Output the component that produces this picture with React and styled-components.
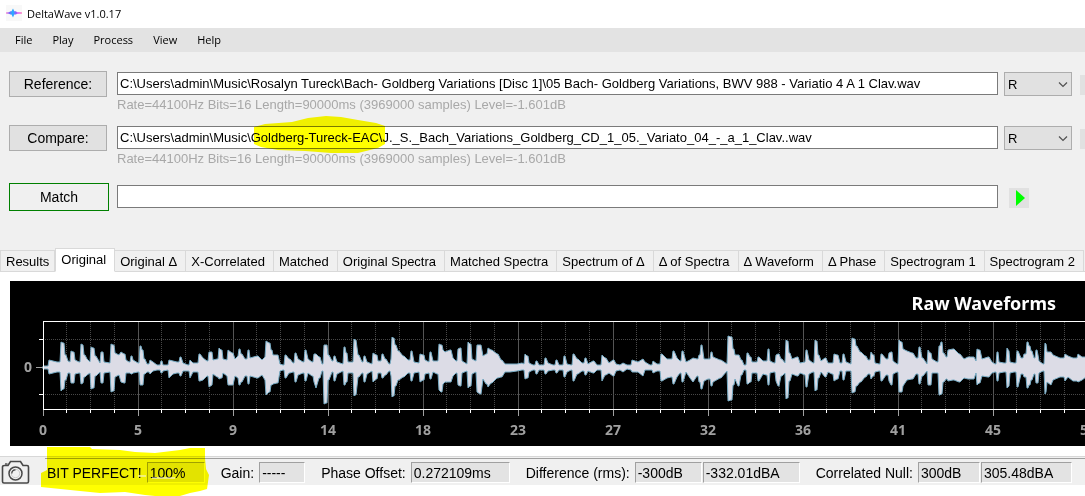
import { useState } from "react";
import styled, { createGlobalStyle } from "styled-components";

const colors = {
  face: "#f0f0f0",
  menu: "#e3e3e3",
  button: "#e1e1e1",
  edge: "#adadad",
  field: "#7a7a7a",
  note: "#a8a8a8",
  tabEdge: "#d9d9d9",
  marker: "#ffff00",
};

const GlobalStyle = createGlobalStyle`
  * {
    box-sizing: border-box;
  }
  body {
    margin: 0;
    background: white;
    color: black;
    font-family: "Liberation Sans", Arial, sans-serif;
    font-size: 13px;
    overflow-x: hidden;
  }
  button, input, select {
    font: inherit;
    color: inherit;
    border-radius: 0;
    padding: 0;
    margin: 0;
  }
`;

const Window = styled.div`
  display: flex;
  flex-direction: column;
  min-height: 100vh;
  overflow: hidden;
`;

const TitleBar = styled.header`
  display: flex;
  align-items: center;
  gap: 5px;
  height: 28px;
  padding: 0 6px 2px;
  font-family: "Open Sans", sans-serif;
`;

const AppName = styled.h1`
  margin: 0;
  font-size: 11px;
  font-weight: 400;
`;

const MenuBar = styled.nav`
  display: flex;
  align-items: center;
  gap: 20px;
  height: 24px;
  padding: 0 15px 2px;
  background: ${colors.menu};
  font-family: "Open Sans", sans-serif;
  font-size: 11px;
`;

const MenuItem = styled.button`
  border: 0;
  background: none;
`;

const Form = styled.form`
  display: flex;
  flex-direction: column;
  gap: 10px;
  padding: 19px 0 37px 9px;
  background: ${colors.face};
`;

const FileRow = styled.div`
  display: flex;
  align-items: flex-start;
  margin-top: ${(props) => (props.$last ? "4px" : "0")};
`;

const ButtonCell = styled.div`
  flex: 0 0 108px;
`;

const FormButton = styled.button`
  display: block;
  width: ${(props) => (props.$primary ? "100px" : "98px")};
  height: ${(props) => (props.$primary ? "28px" : "26px")};
  border: 1px solid ${(props) => (props.$primary ? "#008000" : colors.edge)};
  background: ${(props) => (props.$primary ? colors.face : colors.button)};
  font-size: 14px;
`;

const FieldCell = styled.div`
  position: relative;
  flex: 1;
  min-width: 0;
  padding-top: ${(props) => (props.$last ? "2px" : "1px")};
`;

const PathInput = styled.input`
  display: block;
  width: 100%;
  height: 23px;
  padding: 0 2px;
  border: 1px solid ${colors.field};
  background: white;
`;

const Note = styled.p`
  margin: 0;
  color: ${colors.note};
  line-height: 20px;
`;

const SideCell = styled.div`
  display: flex;
  justify-content: space-between;
  flex: 0 0 87px;
  padding: 1px 0 0 6px;
`;

const SelectBox = styled.div`
  position: relative;
  width: 68px;
  height: 24px;
`;

const Channel = styled.select`
  appearance: none;
  width: 100%;
  height: 100%;
  padding: 0 3px;
  border: 1px solid ${colors.edge};
  background: ${colors.button};
`;

const Chevron = styled.svg`
  position: absolute;
  top: 9px;
  right: 4px;
  pointer-events: none;
`;

const Browse = styled.button`
  width: 5px;
  height: 20px;
  margin-top: 3px;
  border: 0;
  background: ${colors.button};
`;

const PlayButton = styled.button`
  display: flex;
  align-items: center;
  width: 20px;
  height: 20px;
  margin: 4px 0 0 5px;
  padding-left: 7px;
  border: 0;
  background: ${colors.button};
`;

const Marker = styled.svg`
  position: absolute;
  top: ${(props) => props.$top};
  left: ${(props) => props.$left};
  pointer-events: none;
  mix-blend-mode: ${(props) => (props.$plain ? "normal" : "multiply")};
`;

const Tabs = styled.div`
  display: flex;
  align-items: flex-end;
  height: 24px;
  background: linear-gradient(${colors.face} 23px, ${colors.tabEdge} 23px);
`;

const Tab = styled.button`
  flex: none;
  height: ${(props) => (props.$active ? "24px" : "22px")};
  padding: 0 8px ${(props) => (props.$active ? "2px" : "0")} 5px;
  border: 1px solid ${colors.tabEdge};
  border-left-width: ${(props) => (props.$active ? "1px" : "0")};
  border-bottom-color: ${(props) => (props.$active ? "white" : colors.tabEdge)};
  background: ${(props) => (props.$active ? "white" : colors.face)};
  white-space: nowrap;

  &:first-child {
    border-left-width: 1px;
    padding-right: 5px;
  }
`;

const Panel = styled.main`
  padding: 9px 0 10px 10px;
  background: white;
`;

const Chart = styled.figure`
  display: flex;
  flex-direction: column;
  margin: 0;
  background: black;
  color: white;
`;

const ChartTitle = styled.figcaption`
  height: 40px;
  padding-right: 29px;
  font-family: "Noto Sans", sans-serif;
  font-size: 18px;
  font-weight: 700;
  line-height: 45px;
  text-align: right;
`;

const Plot = styled.svg`
  display: block;
  width: 100%;
  height: 125px;
  overflow: hidden;
  font-family: "Noto Sans", sans-serif;
  font-size: 14px;
  font-weight: 700;
`;

const StatusBar = styled.footer`
  position: relative;
  display: flex;
  height: 29px;
  padding: 1px 0 0 1px;
  border-top: 1px solid #d7d7d7;
  background: ${colors.face};
`;

const CameraButton = styled.button`
  flex: 0 0 44px;
  display: flex;
  padding-top: 1px;
  border: 0;
  background: none;
`;

const StatusItems = styled.div`
  flex: 1;
  display: flex;
  align-items: flex-start;
  gap: 16px;
  padding: 3px 0 0 2px;
  border-top: 1px solid #a0a0a0;
  font-size: 14px;
  white-space: nowrap;
`;

const StatusGroup = styled.div`
  display: flex;
  align-items: center;
  gap: 1px;
`;

const StatusLabel = styled.label`
  margin-right: 4px;
`;

const Value = styled.output`
  width: ${(props) => props.$width}px;
  height: 21px;
  padding-left: 2px;
  border: 1px solid;
  border-color: #a0a0a0 white white #a0a0a0;
  background: ${colors.menu};
  line-height: 20px;
`;

const menus = ["File", "Play", "Process", "View", "Help"];

const tabs = [
  "Results",
  "Original",
  "Original Δ",
  "X-Correlated",
  "Matched",
  "Original Spectra",
  "Matched Spectra",
  "Spectrum of Δ",
  "Δ of Spectra",
  "Δ Waveform",
  "Δ Phase",
  "Spectrogram 1",
  "Spectrogram 2",
];

const status = [
  { label: "BIT PERFECT!", values: [["100%", 58]] },
  { label: "Gain:", values: [["-----", 46]] },
  { label: "Phase Offset:", values: [["0.272109ms", 99]] },
  { label: "Difference (rms):", values: [["-300dB", 67], ["-332.01dBA", 97]] },
  { label: "Correlated Null:", values: [["300dB", 62], ["305.48dBA", 91]] },
];

const seconds = [0, 5, 9, 14, 18, 23, 27, 32, 36, 41, 45, 50];

// x, height above the axis, depth below it
const envelope = [
  [43, 1, 1], [48, 1, 1], [49, 7, 6], [57, 5, 4], [60, 5, 4], [61, 25, 23],
  [63, 24, 21], [65, 12, 12], [68, 6, 5], [70, 5, 5], [71, 16, 15],
  [73, 15, 15], [75, 7, 6], [79, 5, 5], [81, 23, 16], [83, 22, 15],
  [84, 12, 9], [87, 8, 7], [90, 5, 5], [91, 20, 21], [93, 19, 20],
  [95, 11, 8], [100, 4, 4], [101, 15, 15], [103, 15, 15], [104, 5, 5],
  [110, 4, 4], [111, 23, 24], [113, 22, 23], [115, 14, 9], [119, 12, 7],
  [121, 15, 14], [124, 13, 15], [126, 7, 5], [129, 5, 5], [131, 11, 6],
  [133, 7, 5], [138, 4, 4], [140, 21, 17], [142, 17, 17], [144, 8, 6],
  [147, 3, 4], [150, 7, 6], [153, 5, 3], [157, 2, 2], [161, 6, 5],
  [163, 2, 3], [168, 2, 2], [169, 7, 10], [173, 6, 6], [177, 5, 5],
  [180, 10, 8], [183, 4, 3], [188, 2, 3], [190, 7, 10], [193, 4, 4],
  [198, 4, 4], [199, 13, 13], [203, 9, 12], [207, 6, 8], [209, 15, 19],
  [212, 15, 17], [213, 7, 6], [217, 8, 9], [219, 19, 11], [221, 17, 10],
  [223, 8, 5], [227, 7, 8], [228, 17, 17], [232, 14, 17], [235, 8, 8],
  [238, 11, 10], [239, 18, 17], [241, 13, 14], [245, 8, 8], [248, 17, 16],
  [250, 9, 8], [257, 11, 10], [262, 7, 7], [265, 10, 12], [266, 26, 27],
  [269, 24, 24], [271, 17, 17], [273, 12, 16], [277, 12, 15], [280, 3, 3],
  [283, 2, 2], [285, 12, 10], [289, 8, 5], [293, 4, 4], [295, 14, 14],
  [298, 8, 7], [303, 5, 5], [305, 17, 13], [308, 8, 5], [312, 5, 8],
  [314, 13, 14], [316, 13, 20], [319, 10, 10], [322, 3, 3], [324, 22, 36],
  [326, 22, 35], [328, 12, 12], [332, 6, 4], [334, 11, 13], [337, 5, 6],
  [343, 3, 3], [344, 20, 17], [346, 14, 14], [348, 5, 5], [352, 5, 5],
  [354, 28, 28], [355, 27, 27], [358, 12, 9], [362, 5, 5], [364, 11, 14],
  [367, 5, 6], [372, 3, 3], [373, 14, 14], [376, 12, 11], [378, 6, 5],
  [382, 13, 10], [385, 8, 7], [389, 3, 3], [391, 8, 8], [392, 30, 29],
  [393, 29, 28], [395, 22, 18], [398, 16, 12], [403, 11, 9], [408, 7, 5],
  [411, 16, 13], [414, 5, 5], [419, 4, 4], [420, 13, 14], [423, 12, 12],
  [425, 7, 6], [429, 5, 5], [430, 15, 11], [433, 6, 4], [437, 6, 6],
  [439, 23, 22], [441, 22, 24], [443, 17, 16], [445, 15, 14], [450, 17, 14],
  [453, 9, 8], [456, 6, 5], [458, 18, 17], [460, 19, 18], [462, 6, 5],
  [467, 3, 3], [468, 25, 20], [470, 23, 18], [472, 8, 6], [476, 6, 4],
  [477, 22, 24], [480, 22, 26], [483, 11, 11], [486, 13, 16], [488, 19, 19],
  [491, 17, 15], [497, 13, 10], [501, 7, 9], [505, 3, 4], [510, 3, 4],
  [517, 3, 3], [522, 4, 2], [524, 3, 2], [525, 13, 11], [527, 11, 10],
  [529, 4, 4], [533, 2, 2], [536, 6, 6], [539, 2, 2], [543, 2, 2],
  [545, 9, 6], [548, 4, 3], [553, 2, 2], [556, 7, 5], [559, 2, 2],
  [563, 2, 2], [564, 11, 9], [567, 3, 4], [571, 2, 2], [573, 13, 13],
  [577, 8, 6], [582, 4, 3], [585, 9, 7], [588, 3, 3], [593, 6, 5],
  [597, 2, 2], [601, 2, 2], [602, 12, 13], [605, 9, 7], [609, 4, 5],
  [613, 7, 8], [616, 3, 3], [620, 2, 2], [623, 4, 4], [627, 2, 1],
  [631, 2, 2], [632, 7, 4], [638, 5, 4], [643, 8, 8], [645, 5, 2],
  [650, 2, 2], [653, 6, 5], [657, 3, 3], [660, 3, 3], [661, 13, 13],
  [667, 8, 10], [671, 8, 9], [673, 16, 16], [677, 9, 9], [680, 6, 5],
  [682, 16, 14], [686, 5, 4], [690, 7, 10], [693, 9, 14], [697, 8, 8],
  [699, 12, 14], [701, 22, 21], [704, 8, 13], [708, 8, 11], [711, 15, 18],
  [713, 10, 14], [720, 7, 10], [727, 3, 3], [728, 31, 33], [731, 30, 32],
  [733, 18, 17], [735, 12, 11], [738, 12, 18], [741, 7, 7], [744, 2, 2],
  [746, 2, 2], [747, 14, 16], [750, 10, 14], [752, 5, 5], [756, 5, 5],
  [758, 10, 13], [763, 6, 6], [766, 6, 7], [768, 18, 17], [770, 6, 5],
  [774, 4, 4], [776, 12, 13], [778, 13, 18], [781, 8, 8], [785, 4, 5],
  [786, 27, 31], [787, 26, 30], [789, 14, 13], [792, 8, 6], [797, 10, 8],
  [800, 4, 5], [805, 5, 7], [806, 17, 19], [808, 12, 12], [809, 7, 6],
  [813, 4, 4], [815, 27, 23], [816, 26, 22], [818, 12, 10], [821, 6, 4],
  [825, 9, 9], [828, 4, 4], [832, 4, 6], [834, 13, 13], [837, 12, 11],
  [840, 4, 3], [843, 13, 12], [846, 5, 3], [851, 3, 3], [852, 29, 25],
  [854, 28, 24], [856, 21, 18], [860, 15, 14], [865, 11, 9], [868, 7, 6],
  [871, 15, 11], [873, 12, 8], [875, 4, 4], [879, 3, 3], [881, 13, 13],
  [886, 8, 7], [889, 14, 13], [891, 15, 17], [893, 6, 6], [897, 3, 4],
  [899, 27, 24], [901, 25, 24], [903, 18, 18], [907, 16, 12], [912, 14, 11],
  [916, 9, 6], [919, 20, 16], [922, 9, 8], [927, 3, 3], [928, 17, 17],
  [930, 14, 17], [932, 8, 5], [937, 5, 5], [939, 21, 27], [941, 25, 26],
  [943, 14, 14], [946, 10, 11], [948, 17, 13], [953, 18, 12], [959, 13, 14],
  [964, 8, 10], [968, 10, 11], [973, 10, 11], [976, 6, 5], [977, 18, 17],
  [979, 17, 15], [982, 8, 8], [988, 10, 9], [992, 5, 5], [995, 3, 4],
  [997, 15, 13], [999, 5, 5], [1004, 4, 4], [1006, 4, 4], [1007, 19, 20],
  [1009, 16, 18], [1010, 5, 5], [1014, 4, 4], [1017, 16, 19], [1021, 9, 6],
  [1024, 13, 9], [1027, 25, 20], [1029, 21, 17], [1031, 16, 12],
  [1034, 9, 6], [1036, 17, 15], [1038, 12, 15], [1039, 6, 5], [1043, 3, 3],
  [1045, 24, 26], [1046, 23, 24], [1047, 15, 14], [1051, 15, 17],
  [1053, 12, 12], [1060, 9, 9], [1065, 13, 13], [1068, 11, 9], [1073, 9, 13],
  [1078, 13, 14], [1082, 10, 12], [1086, 10, 9],
];

const AXIS = 46;
const LEFT = 33;

// every attack starts abruptly and holds for a pixel before it decays
function steps() {
  const points = [];
  envelope.forEach(([x, up, down], i) => {
    const [lastX, lastUp, lastDown] = envelope[i - 1] || [x, up, down];
    if (x - lastX > 1 && up > lastUp + 3) points.push([x - 1, lastUp, lastDown]);
    if (x - lastX > 1 && up < lastUp - 3) points.push([lastX + 1, lastUp, lastDown]);
    points.push([x, up, down]);
  });
  return points;
}

function wavePath() {
  const points = steps();
  const top = points.map(([x, up]) => `${x - 10} ${AXIS - up}`);
  const bottom = points.map(([x, , down]) => `${x - 10} ${AXIS + down + 1}`);
  return `M${top.join("L")}L${bottom.reverse().join("L")}Z`;
}

const Logo = () => (
  <svg width="16" height="16" viewBox="0 0 16 16" aria-hidden="true">
    <defs>
      <linearGradient id="logo">
        <stop offset="0" stopColor="#ff5fc0" />
        <stop offset="0.2" stopColor="#7a5cff" />
        <stop offset="0.42" stopColor="#1fb4ff" />
        <stop offset="0.62" stopColor="#8a5cff" />
        <stop offset="0.8" stopColor="#e23cf0" />
        <stop offset="1" stopColor="#ff4fa0" />
      </linearGradient>
    </defs>
    <rect width="16" height="16" fill="#f8f8f8" />
    <path
      d="M0 7.5L3 7.2 4.5 6.3 5.5 6.3 7 3.5 8.3 6.3 10 6.3 11 7.2 16 7.5V8.5L11 8.8 10 9.5 8.3 9.5 7 12.5 5.5 9.5 4.5 9.5 3 8.8 0 8.5Z"
      fill="url(#logo)"
    />
  </svg>
);

const Camera = () => (
  <svg width="29" height="26" viewBox="0 0 29 26" fill="none" stroke="#484848">
    <path
      d="M3.5 6.5H7L9.5 2.5H19.5L22 6.5H26Q27.5 6.5 27.5 8V22.5Q27.5 24 26 24H3Q1.5 24 1.5 22.5V8Q1.5 6.5 3.5 6.5Z"
      strokeWidth="1.6"
    />
    <path d="M4 5H6.5" strokeWidth="1.4" />
    <circle cx="14.5" cy="14.5" r="6.5" strokeWidth="1.5" />
    <circle cx="14.5" cy="14.5" r="4.2" strokeWidth="0.6" stroke="#b0b0b0" />
    <path d="M10.8 14.5A3.8 3.8 0 0 1 14.5 10.8" strokeWidth="1.3" />
  </svg>
);

const ChannelSelect = ({ label }) => (
  <SelectBox>
    <Channel aria-label={label} defaultValue="R">
      <option>L</option>
      <option>R</option>
    </Channel>
    <Chevron width="10" height="7" viewBox="0 0 10 7">
      <path d="M1 1.5L5 5.5 9 1.5" fill="none" stroke="#505050" strokeWidth="1.2" />
    </Chevron>
  </SelectBox>
);

const WavePlot = () => (
  <Plot role="img" aria-label="Raw Waveforms">
    <g shapeRendering="crispEdges">
      {seconds.map((_, i) =>
        [1, 2, 3].map((n) => {
          const x = Math.floor(LEFT + i * 95 + n * 23.75) + 0.5;
          return (
            <g key={x}>
              <path d={`M${x} 1V88`} stroke="#484848" strokeDasharray="1 1" />
              <path d={`M${x} 89V92`} stroke="white" />
            </g>
          );
        })
      )}
      {seconds.map((s, i) => (
        <g key={s}>
          <path d={`M${LEFT + i * 95 + 0.5} 1V88`} stroke="#555" />
          <path d={`M${LEFT + i * 95 + 0.5} 89V95`} stroke="#a0a0a0" />
        </g>
      ))}
      {[18.5, 73.5].map((y) => (
        <g key={y}>
          <line x1={LEFT} x2="100%" y1={y} y2={y} stroke="#484848" strokeDasharray="1 1" />
          <line x1={LEFT - 4} x2={LEFT} y1={y} y2={y} stroke="white" />
        </g>
      ))}
      <line x1={LEFT - 7} x2={LEFT} y1="46.5" y2="46.5" stroke="#a0a0a0" />
    </g>
    <path d={wavePath()} fill="#dcdce6" stroke="#78adc6" strokeWidth="1" />
    <g shapeRendering="crispEdges" stroke="white">
      <line x1={LEFT} x2="100%" y1="0.5" y2="0.5" />
      <line x1={LEFT} x2="100%" y1="88.5" y2="88.5" />
      <line x1={LEFT + 0.5} x2={LEFT + 0.5} y1="0" y2="89" />
    </g>
    <g fill="#a0a0a0" textAnchor="middle">
      <text x="18" y="51">0</text>
      {seconds.map((s, i) => (
        <text key={s} x={LEFT + i * 95} y="114">{s}</text>
      ))}
    </g>
  </Plot>
);

export default function App() {
  const [active, setActive] = useState("Original");
  return (
    <>
      <GlobalStyle />
      <Window>
        <TitleBar>
          <Logo />
          <AppName>DeltaWave v1.0.17</AppName>
        </TitleBar>
        <MenuBar>
          {menus.map((name) => (
            <MenuItem key={name}>{name}</MenuItem>
          ))}
        </MenuBar>
        <Form onSubmit={(e) => e.preventDefault()}>
          <FileRow>
            <ButtonCell>
              <FormButton type="button" id="reference">Reference:</FormButton>
            </ButtonCell>
            <FieldCell>
              <PathInput
                aria-labelledby="reference"
                defaultValue="C:\Users\admin\Music\Rosalyn Tureck\Bach- Goldberg Variations [Disc 1]\05 Bach- Goldberg Variations, BWV 988 - Variatio 4 A 1 Clav.wav"
              />
              <Note>Rate=44100Hz Bits=16 Length=90000ms (3969000 samples) Level=-1.601dB</Note>
            </FieldCell>
            <SideCell>
              <ChannelSelect label="Reference channel" />
              <Browse type="button" aria-label="Reference options" />
            </SideCell>
          </FileRow>
          <FileRow>
            <ButtonCell>
              <FormButton type="button" id="compare">Compare:</FormButton>
            </ButtonCell>
            <FieldCell>
              <PathInput
                aria-labelledby="compare"
                defaultValue="C:\Users\admin\Music\Goldberg-Tureck-EAC\J._S._Bach_Variations_Goldberg_CD_1_05._Variato_04_-_a_1_Clav..wav"
              />
              <Note>Rate=44100Hz Bits=16 Length=90000ms (3969000 samples) Level=-1.601dB</Note>
              <Marker $top="-9px" $left="134px" width="136" height="38">
                <path
                  d="M3 11L14 8 41 6 57 2 75 0 90 1 107 4 125 7 134 10V28L127 32 107 37H80L54 35 27 34 10 31 3 28Z"
                  fill={colors.marker}
                />
              </Marker>
            </FieldCell>
            <SideCell>
              <ChannelSelect label="Compare channel" />
              <Browse type="button" aria-label="Compare options" />
            </SideCell>
          </FileRow>
          <FileRow $last>
            <ButtonCell>
              <FormButton $primary id="match">Match</FormButton>
            </ButtonCell>
            <FieldCell $last>
              <PathInput aria-labelledby="match" />
            </FieldCell>
            <SideCell>
              <PlayButton type="button" aria-label="Play">
                <svg width="9" height="16" viewBox="0 0 9 16">
                  <path d="M0 0L9 8 0 16Z" fill="#00ff00" />
                </svg>
              </PlayButton>
            </SideCell>
          </FileRow>
        </Form>
        <Tabs role="tablist">
          {tabs.map((name) => (
            <Tab
              key={name}
              role="tab"
              aria-selected={name === active}
              $active={name === active}
              onClick={() => setActive(name)}
            >
              {name}
            </Tab>
          ))}
        </Tabs>
        <Panel>
          <Chart>
            <ChartTitle>Raw Waveforms</ChartTitle>
            <WavePlot />
          </Chart>
        </Panel>
        <StatusBar>
          <CameraButton aria-label="Save picture">
            <Camera />
          </CameraButton>
          <StatusItems>
            {status.map(({ label, values }) => (
              <StatusGroup key={label}>
                <StatusLabel htmlFor={values[0][0]}>{label}</StatusLabel>
                {values.map(([text, width]) => (
                  <Value key={text} id={text} $width={width}>{text}</Value>
                ))}
              </StatusGroup>
            ))}
          </StatusItems>
          <Marker $top="-12px" $left="40px" width="170" height="52">
            <path
              d="M7 2H50L52 4 80 5 95 7 115 8 140 5 150 3H165V13L166 24 169 30 167 44 160 46 150 48 140 51 125 52 105 50 85 47 60 48 40 46 1 42V28L7 25Z"
              fill={colors.marker}
            />
          </Marker>
          <Marker $plain $top="18px" $left="137px" width="42" height="5">
            <path d="M1 1H9M15 3H38" stroke="#f4f4f4" strokeWidth="1" />
          </Marker>
        </StatusBar>
      </Window>
    </>
  );
}
